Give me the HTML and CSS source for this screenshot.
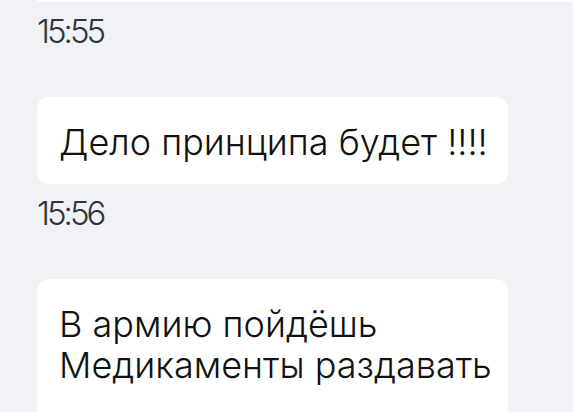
FILE: index.html
```html
<!DOCTYPE html>
<html lang="ru">
<head>
<meta charset="utf-8">
<title>Чат</title>
<link rel="stylesheet" href="styles.css">
</head>
<body>
<div class="chat">
  <div class="bubble-prev"></div>
  <div class="time">15:55</div>
  <div class="bubble">Дело принципа будет !!!!</div>
  <div class="time">15:56</div>
  <div class="bubble bubble-last">В армию пойдёшь<br>Медикаменты раздавать</div>
</div>
</body>
</html>
```

FILE: styles.css
```css
html, body {
  margin: 0;
  padding: 0;
  background: #f0f2f5;
  overflow: hidden;
}
body {
  width: 573px;
  height: 412px;
}
.chat {
  display: flex;
  flex-direction: column;
  align-items: flex-start;
  padding-left: 37px;
}
.bubble-prev {
  width: 560px;
  height: 2px;
  background: #ffffff;
  border-bottom-left-radius: 2px;
}
.time {
  margin: 13px 0 50px;
  font-family: Inter, Roboto, sans-serif;
  font-weight: 300;
  font-size: 33px;
  line-height: 32px;
  letter-spacing: -3px;
  color: #2e363c;
}
.bubble {
  box-sizing: border-box;
  width: 471px;
  padding: 25px 22px 21px;
  background: #ffffff;
  border-radius: 12px;
  font-family: Inter, Roboto, sans-serif;
  font-weight: 300;
  font-size: 36px;
  line-height: 41px;
  color: #111111;
  white-space: nowrap;
}
.bubble-last {
  padding-bottom: 40px;
}
```
